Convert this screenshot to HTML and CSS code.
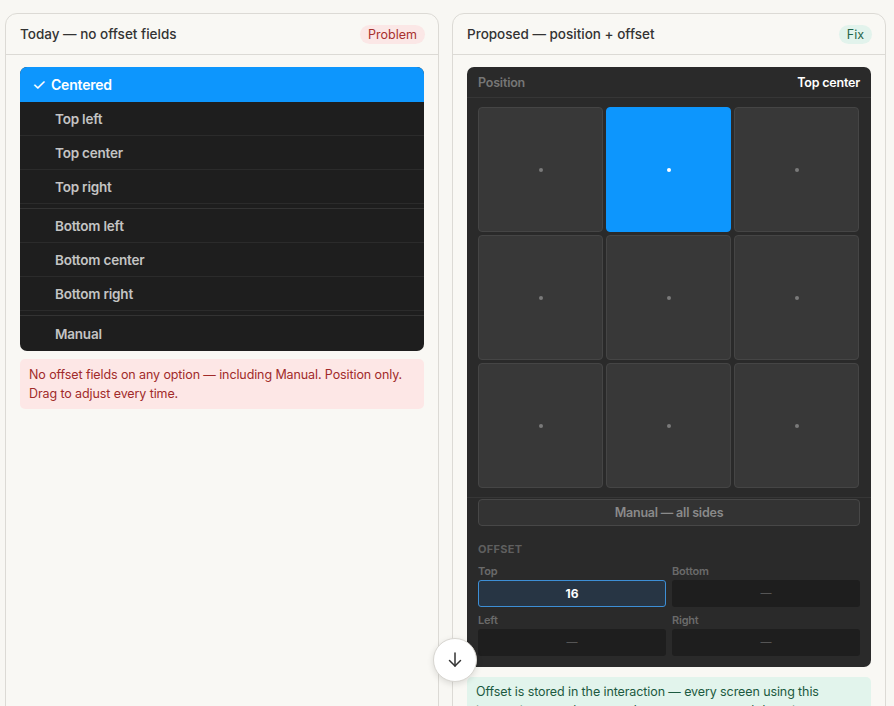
FILE: index.html
```html
<!DOCTYPE html>
<html lang="en">
  <head>
    <meta charset="UTF-8" />
    <meta name="viewport" content="width=device-width, initial-scale=1.0" />
    <title>Position offset</title>
    <link rel="stylesheet" href="styles.css">
  </head>
  <body>
    <div class="compare">
      <div class="card">
        <div class="card-head">
          <span class="card-title">Today — no offset fields</span>
          <span class="badge bad">Problem</span>
        </div>
        <div class="card-body">
          <div class="menu">
            <div class="item active"><span class="check">✓</span>Centered</div>
            <div class="item">Top left</div>
            <div class="item">Top center</div>
            <div class="item">Top right</div>
            <div class="sep"></div>
            <div class="item">Bottom left</div>
            <div class="item">Bottom center</div>
            <div class="item">Bottom right</div>
            <div class="sep"></div>
            <div class="item last">Manual</div>
          </div>
          <div class="note red">
            No offset fields on any option — including Manual. Position only.<br>
            Drag to adjust every time.
          </div>
        </div>
      </div>

      <div class="card">
        <div class="card-head">
          <span class="card-title">Proposed — position + offset</span>
          <span class="badge good">Fix</span>
        </div>
        <div class="card-body">
          <div class="panel">
            <div class="panel-head">
              <span class="panel-label">Position</span>
              <span class="panel-value">Top center</span>
            </div>
            <div class="grid-wrap">
              <div class="pos-grid">
                <div class="cell"><i></i></div>
                <div class="cell on"><i></i></div>
                <div class="cell"><i></i></div>
                <div class="cell"><i></i></div>
                <div class="cell"><i></i></div>
                <div class="cell"><i></i></div>
                <div class="cell"><i></i></div>
                <div class="cell"><i></i></div>
                <div class="cell"><i></i></div>
              </div>
            </div>
            <div class="manual-wrap">
              <div class="manual">Manual — all sides</div>
            </div>
            <div class="offset">
              <div class="offset-title">OFFSET</div>
              <div class="fields">
                <div class="field">
                  <div class="field-label">Top</div>
                  <div class="field-box focus">16</div>
                </div>
                <div class="field">
                  <div class="field-label">Bottom</div>
                  <div class="field-box">—</div>
                </div>
                <div class="field">
                  <div class="field-label">Left</div>
                  <div class="field-box">—</div>
                </div>
                <div class="field">
                  <div class="field-label">Right</div>
                  <div class="field-box">—</div>
                </div>
              </div>
            </div>
          </div>
          <div class="note green">
            Offset is stored in the interaction — every screen using this<br>
            interaction gets the same placement, no manual dragging.
          </div>
        </div>
      </div>

      <button class="scroll-down" type="button">
        <svg width="18" height="18" viewBox="0 0 18 18" fill="none" stroke="#333" stroke-width="1.5" stroke-linecap="round" stroke-linejoin="round">
          <path d="M9 2v13" />
          <path d="M3.5 9.5L9 15l5.5-5.5" />
        </svg>
      </button>
    </div>
  </body>
</html>
```

FILE: styles.css
```css
* {
  margin: 0;
  padding: 0;
  box-sizing: border-box;
}
body {
  background: #f8f7f3;
  font-family: Inter, "Noto Sans", sans-serif;
  color: #2b2b2b;
  height: 706px;
  overflow: hidden;
}

.compare {
  position: relative;
  display: grid;
  grid-template-columns: 434px 434px;
  gap: 13px;
  padding: 13px 8px 0 5px;
  height: 760px;
}

.card {
  background: #f9f8f4;
  border: 1px solid #dcdad5;
  border-radius: 12px;
}
.card-head {
  display: flex;
  align-items: center;
  justify-content: space-between;
  height: 41px;
  padding: 0 13px 0 14px;
  border-bottom: 1px solid #dcdad5;
}
.card-title {
  font-size: 13.5px;
  font-weight: 500;
  color: #333;
}
.badge {
  font-size: 12.5px;
  padding: 2px 8px;
  border-radius: 10px;
}
.badge.bad {
  background: #fbe7e6;
  color: #a8302e;
}
.badge.good {
  background: #e2f3ec;
  color: #1f6448;
}
.card-body {
  padding: 12px 14px;
}

/* today: dropdown */
.menu {
  background: #1e1e1e;
  border-radius: 7px;
  overflow: hidden;
}
.item {
  height: 34px;
  line-height: 35px;
  padding-left: 35px;
  font-size: 13.5px;
  font-weight: 600;
  letter-spacing: -0.2px;
  color: #c4c4c4;
  border-bottom: 1px solid #2b2b2b;
}
.item.active {
  height: 35px;
  line-height: 34px;
  padding-left: 12px;
  background: #0d96fd;
  color: #fff;
  font-size: 14px;
  border-bottom: none;
}
.item.last {
  border-bottom: none;
  height: 35px;
  line-height: 36px;
}
.check {
  display: inline-block;
  width: 19px;
  font-size: 16px;
  font-weight: 400;
}
.sep {
  height: 5px;
  border-bottom: 1px solid #333;
}

.note {
  margin-top: 8px;
  padding: 6px 4px 6px 9px;
  border-radius: 5px;
  font-size: 12.5px;
  line-height: 19px;
  letter-spacing: -0.1px;
}
.note.red {
  background: #fde7e6;
  color: #a12b2a;
}
.note.green {
  margin-top: 10px;
  background: #e2f4ec;
  color: #1c5a40;
  padding: 5px 9px;
}

/* proposed: position panel */
.panel {
  background: #2a2a2a;
  border-radius: 7px;
  overflow: hidden;
}
.panel-head {
  display: flex;
  justify-content: space-between;
  align-items: center;
  height: 31px;
  padding: 0 11px;
  border-bottom: 1px solid #363636;
  font-size: 12.5px;
  font-weight: 600;
  letter-spacing: -0.2px;
}
.panel-label {
  color: #767676;
}
.panel-value {
  color: #fff;
}
.grid-wrap {
  padding: 9px 11px 9px;
  border-bottom: 1px solid #363636;
}
.pos-grid {
  display: grid;
  grid-template-columns: repeat(3, 125px);
  grid-auto-rows: 125px;
  gap: 3px;
}
.cell {
  display: flex;
  align-items: center;
  justify-content: center;
  background: #383838;
  border: 1px solid #454545;
  border-radius: 4px;
}
.cell i {
  width: 4px;
  height: 4px;
  border-radius: 50%;
  background: #7a7a7a;
}
.cell.on {
  background: #0d96fd;
  border-color: #0d96fd;
}
.cell.on i {
  background: #fff;
}
.manual-wrap {
  padding: 1px 11px 0;
}
.manual {
  height: 27px;
  line-height: 25px;
  text-align: center;
  background: #333;
  border: 1px solid #474747;
  border-radius: 4px;
  color: #8a8a8a;
  font-size: 12.5px;
  font-weight: 600;
  letter-spacing: -0.2px;
}
.offset {
  padding: 16px 11px 11px;
}
.offset-title {
  font-size: 11px;
  font-weight: 700;
  color: #5f5f5f;
  letter-spacing: 0.3px;
  margin-bottom: 8px;
}
.fields {
  display: grid;
  grid-template-columns: 1fr 1fr;
  column-gap: 6px;
  row-gap: 6px;
}
.field-label {
  font-size: 11px;
  font-weight: 600;
  color: #6a6a6a;
  margin-bottom: 2px;
  letter-spacing: -0.2px;
}
.field-box {
  height: 27px;
  line-height: 27px;
  text-align: center;
  background: #1e1e1e;
  border-radius: 3px;
  color: #555;
  font-size: 11px;
}
.field-box.focus {
  background: #273544;
  border: 1px solid #3d8fd6;
  line-height: 25px;
  color: #fff;
  font-weight: 700;
  font-size: 12px;
}

.scroll-down {
  position: absolute;
  left: 433px;
  top: 638px;
  width: 44px;
  height: 44px;
  border-radius: 50%;
  background: #fff;
  border: 1px solid #d8d6d1;
  box-shadow: 0 2px 6px rgba(0, 0, 0, 0.12);
  display: flex;
  align-items: center;
  justify-content: center;
  cursor: pointer;
}
```
